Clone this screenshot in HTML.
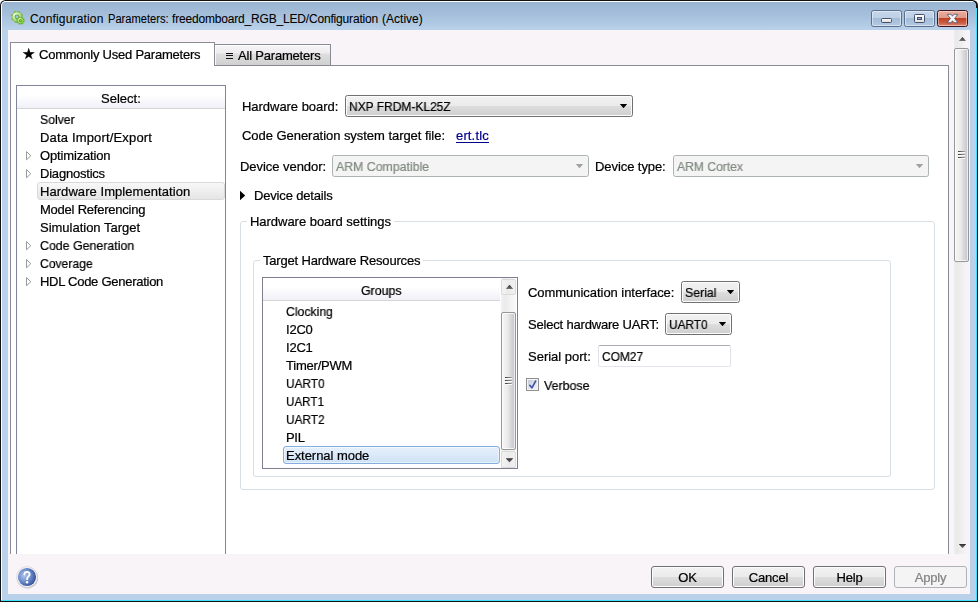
<!DOCTYPE html>
<html>
<head>
<meta charset="utf-8">
<title>Configuration Parameters</title>
<style>
html,body{margin:0;padding:0;}
body{width:978px;height:602px;overflow:hidden;background:#fff;font-family:"Liberation Sans",sans-serif;font-size:13px;color:#000;position:relative;}
.abs,.t{position:absolute;}
.t{white-space:nowrap;line-height:16px;height:16px;will-change:transform;-webkit-text-stroke:0.22px currentColor;}
.tt{will-change:auto;-webkit-text-stroke:0.08px currentColor;}
#win{position:absolute;left:0;top:0;width:978px;height:602px;background:#111;border-radius:5.5px 5.5px 0 0;overflow:hidden;}
#frame{position:absolute;left:1px;top:1px;width:975px;height:599px;background:#b9d1ea;border-radius:5px 5px 0 0;box-shadow:inset 1px 1px 0 #fff;}
#cyanR{position:absolute;left:976px;top:8px;width:1px;height:593px;background:#3fe4fb;}
#cyanB{position:absolute;left:1px;top:600px;width:976px;height:1px;background:#3fe4fb;}
#titlegrad{position:absolute;left:2px;top:2px;width:974px;height:28px;border-radius:3.5px 3.5px 0 0;background:linear-gradient(#99b4d1 0%,#a5bfdb 45%,#b9d1ea 100%);}
#client{position:absolute;left:8px;top:30px;width:962px;height:564px;background:#f8f4f8;}
/* caption buttons */
.cb{position:absolute;top:10px;height:17px;width:31px;box-sizing:border-box;border:1px solid #5b6e8c;border-radius:2.5px;box-shadow:inset 0 0 0 1px rgba(255,255,255,.45);background:linear-gradient(#c4d6ea 0%,#bdd0e6 47%,#a3bcd8 50%,#b3c9e2 100%);}
#bclose{border-color:#3f1620;box-shadow:inset 0 0 0 1px rgba(255,225,215,.55);background:linear-gradient(#eaac9f 0%,#e09a8b 45%,#bf4226 50%,#c9583e 75%,#dc8670 100%);}
/* tabs */
#pane{position:absolute;left:10px;top:65px;width:939px;height:489px;background:#fff;border:1px solid #898c95;border-bottom:none;box-sizing:border-box;}
#tab1{position:absolute;left:10px;top:42px;width:205px;height:24px;background:#fff;border:1px solid #898c95;border-bottom:none;box-sizing:border-box;}
#tab2{position:absolute;left:214px;top:44px;width:117px;height:21px;box-shadow:inset 1px 1px 0 rgba(255,255,255,.8);background:linear-gradient(#f7f4f7 0%,#eeecee 40%,#dedede 46%,#d0d0d0 100%);border:1px solid #898c95;border-bottom:none;box-sizing:border-box;}
/* tree */
#tree{position:absolute;left:16px;top:85px;width:210px;height:469px;border:1px solid #82849a;border-bottom:none;box-sizing:border-box;background:#fff;}
#treehd{position:absolute;left:17px;top:86px;width:208px;height:22px;background:linear-gradient(#ffffff 0%,#ffffff 40%,#f0f0f8 100%);border-bottom:1px solid #d5d5d5;}
#sel1{position:absolute;left:37px;top:182px;width:188px;height:18px;box-sizing:border-box;border:1px solid #d9d9d9;border-radius:3px;background:linear-gradient(#f8f8f8,#e5e5e5);}
.tri{position:absolute;width:7px;height:9px;}
/* combos */
.combo{position:absolute;box-sizing:border-box;height:22px;border:1px solid #707070;border-radius:2.5px;box-shadow:inset 0 0 0 1px #fcfcfc;background:linear-gradient(#f2f2f2 0%,#ebebeb 48%,#dddddd 52%,#cfcfcf 100%);}
.combo.dis{border-color:#adb2b5;background:#f4f4f4;box-shadow:none;}
.arr{position:absolute;width:7.8px;height:4.4px;margin-left:-0.4px;margin-top:-0.2px;background:#000;clip-path:polygon(0 0,100% 0,50% 100%);}
.arr.g{background:#a0a0a0;}
.gb{position:absolute;box-sizing:border-box;border:1px solid #d5dfe5;border-radius:3px;}
.gbt{background:#fff;padding:0 3px;margin-left:-3px;}
/* list */
#list{position:absolute;left:262px;top:277px;width:256px;height:192px;box-sizing:border-box;border:1px solid #807f92;background:#fff;}
#listhd{position:absolute;left:263px;top:278px;width:237px;height:22px;background:linear-gradient(#ffffff 0%,#ffffff 40%,#f0f0f8 100%);border-bottom:1px solid #d5d5d5;}
#sel2{position:absolute;left:283px;top:446px;width:217px;height:18px;box-sizing:border-box;border:1px solid #84acdd;border-radius:3px;box-shadow:inset 0 0 0 1px rgba(255,255,255,.5);background:linear-gradient(#e6f0fa,#cfe2f7);}
.btn{position:absolute;top:566px;width:73px;height:22px;box-sizing:border-box;border:1px solid #707070;border-radius:3px;box-shadow:inset 0 0 0 1px #fcfcfc;background:linear-gradient(#f2f2f2 0%,#ebebeb 48%,#dddddd 52%,#cfcfcf 100%);text-align:center;line-height:22px;font-size:13px;will-change:transform;-webkit-text-stroke:0.22px currentColor;letter-spacing:-0.2px;}
.btn.dis{border-color:#adb2b5;background:#f4f4f4;color:#838383;box-shadow:none;}
.gray{color:#808a80;}

.thumb{position:absolute;box-sizing:border-box;border:1px solid #979797;border-radius:2px;box-shadow:inset 0 0 0 1px rgba(255,255,255,.7);background:linear-gradient(90deg,#f6f6f6 0%,#ececec 40%,#d6d6da 70%,#c3c3cb 100%);}
.arrU,.arrD{position:absolute;width:7.6px;height:4.3px;margin-left:-0.3px;}
.arrU{background:linear-gradient(#2a2a2a,#7a7a7a);clip-path:polygon(50% 0,100% 100%,0 100%);}
.arrD{background:linear-gradient(#2a2a2a,#7a7a7a);clip-path:polygon(0 0,100% 0,50% 100%);}
.grip{position:absolute;width:7px;height:8px;background:linear-gradient(90deg,#3a3a3a,#a5a5a5) 0 0/100% 1px no-repeat,linear-gradient(90deg,#3a3a3a,#a5a5a5) 0 3px/100% 1px no-repeat,linear-gradient(90deg,#3a3a3a,#a5a5a5) 0 6px/100% 1px no-repeat,linear-gradient(#fbfbfb,#fbfbfb) 0 1px/100% 1px no-repeat,linear-gradient(#fbfbfb,#fbfbfb) 0 4px/100% 1px no-repeat,linear-gradient(#fbfbfb,#fbfbfb) 0 7px/100% 1px no-repeat;}
.sbbtn{position:absolute;box-sizing:border-box;border:1px solid #dadada;border-radius:2px;background:linear-gradient(90deg,#f3f3f3,#ebebeb 50%,#f1f1f1);}
</style>
</head>
<body>
<div id="win">
<div id="frame"></div>
<div id="titlegrad"></div>
<div id="cyanR"></div><div id="cyanB"></div>
<div id="client"></div>

<!-- title -->
<svg class="abs" style="left:10px;top:10px" width="16" height="16" viewBox="0 0 16 16">
<defs><radialGradient id="gg1" cx="0.3" cy="0.3" r="0.8"><stop offset="0" stop-color="#f3fbe6"/><stop offset="0.6" stop-color="#b9e388"/><stop offset="1" stop-color="#93cf5a"/></radialGradient>
<radialGradient id="gg2" cx="0.35" cy="0.3" r="0.8"><stop offset="0" stop-color="#e8f7d0"/><stop offset="0.6" stop-color="#a4dc5c"/><stop offset="1" stop-color="#80c840"/></radialGradient></defs>
<circle cx="7" cy="6.8" r="5.3" fill="none" stroke="#74b646" stroke-width="1.6" stroke-dasharray="2.3 1.86"/>
<circle cx="7" cy="6.8" r="4.9" fill="url(#gg1)" stroke="#78ba48" stroke-width="0.7"/>
<circle cx="7" cy="6.8" r="2.4" fill="#5da334"/>
<circle cx="7" cy="6.8" r="1.5" fill="#a7c2df"/>
<circle cx="10.5" cy="10.6" r="3.5" fill="none" stroke="#62ae34" stroke-width="1.4" stroke-dasharray="1.5 1.25"/>
<circle cx="10.5" cy="10.6" r="3.2" fill="url(#gg2)" stroke="#62ae34" stroke-width="0.7"/>
<circle cx="10.5" cy="10.6" r="1.6" fill="#58a828"/>
<circle cx="10.5" cy="10.6" r="0.7" fill="#8ed040"/>
</svg>
<span class="t tt" id="title1" style="left:30px;top:11px;font-size:12px;letter-spacing:0.167px;">Configuration</span>
<span class="t tt" id="title2" style="left:108px;top:11px;font-size:12px;letter-spacing:0px;transform:scaleX(0.9281);transform-origin:0 50%;">Parameters:</span>
<span class="t tt" id="title3" style="left:172px;top:11px;font-size:12px;letter-spacing:-0.179px;">freedomboard_RGB_LED/Configuration</span>
<span class="t tt" id="title4" style="left:382px;top:11px;font-size:12px;letter-spacing:0.014px;">(Active)</span>
<div class="cb" id="bmin" style="left:871px"></div>
<div class="abs" style="left:881px;top:18px;width:11px;height:5px;box-sizing:border-box;border:1px solid #47506a;border-radius:1.5px;background:linear-gradient(#ffffff,#dcdcdc);"></div>
<div class="cb" id="bmax" style="left:904px"></div>
<div class="abs" style="left:914px;top:14px;width:11px;height:9px;box-sizing:border-box;border:1px solid #47506a;border-radius:1.5px;background:linear-gradient(#ffffff,#e0e0e0);"></div>
<div class="abs" style="left:917px;top:17px;width:5px;height:3px;box-sizing:border-box;border:1px solid #47506a;background:#8fb0d6;"></div>
<div class="cb" id="bclose" style="left:937px"></div>
<svg class="abs" style="left:946px;top:13px" width="13" height="11" viewBox="0 0 13 11"><path d="M1.2 1.3 L5 1.3 L6.5 3.2 L8 1.3 L11.8 1.3 L8.6 5.5 L11.8 9.7 L8 9.7 L6.5 7.8 L5 9.7 L1.2 9.7 L4.4 5.5 Z" fill="#f6f6f6" stroke="#465270" stroke-width="0.8" stroke-linejoin="round"/></svg>

<!-- tabs -->
<div id="pane"></div>
<div id="tab2"></div>
<div id="tab1"></div>
<span class="t" id="star" style="left:22px;top:46px;font-size:15px;">★</span>
<span class="t" id="t_tab1" style="left:39px;top:47px;letter-spacing:-0.235px;">Commonly Used Parameters</span>
<div class="abs" style="left:226px;top:53px;width:7px;height:1px;background:#111;box-shadow:0 2px 0 #111,0 5px 0 #111;"></div>
<span class="t" id="t_tab2" style="left:238px;top:48px;letter-spacing:-0.2px;">All Parameters</span>

<!-- tree -->
<div id="tree"></div>
<div id="treehd"></div>
<span class="t" id="t_select" style="left:101px;top:91px;letter-spacing:0.0px;">Select:</span>
<div id="sel1"></div>
<span class="t" id="tr1" style="left:40px;top:112px;letter-spacing:0px;transform:scaleX(0.9417);transform-origin:0 50%;">Solver</span>
<span class="t" id="tr2" style="left:40px;top:130px;letter-spacing:0.165px;">Data Import/Export</span>
<span class="t" id="tr3" style="left:40px;top:148px;letter-spacing:-0.155px;">Optimization</span>
<span class="t" id="tr4" style="left:40px;top:166px;letter-spacing:-0.21px;">Diagnostics</span>
<span class="t" id="tr5" style="left:40px;top:184px;letter-spacing:0.059px;">Hardware Implementation</span>
<span class="t" id="tr6" style="left:40px;top:202px;letter-spacing:-0.225px;">Model Referencing</span>
<span class="t" id="tr7" style="left:40px;top:220px;letter-spacing:-0.013px;">Simulation Target</span>
<span class="t" id="tr8" style="left:40px;top:238px;letter-spacing:0px;transform:scaleX(0.9515);transform-origin:0 50%;">Code Generation</span>
<span class="t" id="tr9" style="left:40px;top:256px;letter-spacing:0px;transform:scaleX(0.9339);transform-origin:0 50%;">Coverage</span>
<span class="t" id="tr10" style="left:40px;top:274px;letter-spacing:-0.267px;">HDL Code Generation</span>

<svg class="abs" style="left:25px;top:151px" width="8" height="10" viewBox="0 0 8 10"><path d="M1.5 0.6 L1.5 8.8 L5.8 4.7 Z" fill="#fff" stroke="#969c96" stroke-width="1"/></svg>
<svg class="abs" style="left:25px;top:169px" width="8" height="10" viewBox="0 0 8 10"><path d="M1.5 0.6 L1.5 8.8 L5.8 4.7 Z" fill="#fff" stroke="#969c96" stroke-width="1"/></svg>
<svg class="abs" style="left:25px;top:241px" width="8" height="10" viewBox="0 0 8 10"><path d="M1.5 0.6 L1.5 8.8 L5.8 4.7 Z" fill="#fff" stroke="#969c96" stroke-width="1"/></svg>
<svg class="abs" style="left:25px;top:259px" width="8" height="10" viewBox="0 0 8 10"><path d="M1.5 0.6 L1.5 8.8 L5.8 4.7 Z" fill="#fff" stroke="#969c96" stroke-width="1"/></svg>
<svg class="abs" style="left:25px;top:277px" width="8" height="10" viewBox="0 0 8 10"><path d="M1.5 0.6 L1.5 8.8 L5.8 4.7 Z" fill="#fff" stroke="#969c96" stroke-width="1"/></svg>
<!-- right pane -->
<span class="t" id="l_hw" style="left:242px;top:99px;letter-spacing:-0.036px;">Hardware board:</span>
<div class="combo" style="left:345px;top:95px;width:288px;"></div>
<span class="t" id="v_hw" style="left:349px;top:99px;letter-spacing:0px;transform:scaleX(0.922);transform-origin:0 50%;">NXP FRDM-KL25Z</span>
<div class="arr" style="left:620px;top:104px;"></div>

<span class="t" id="l_cg" style="left:242px;top:128px;letter-spacing:-0.044px;">Code Generation system target file:</span>
<span class="t" id="v_cg" style="left:456px;top:128px;color:#00008b;letter-spacing:0.15px;">ert.tlc</span>
<div class="abs" style="left:456px;top:142px;width:33px;height:1px;background:#00008b;"></div>

<span class="t" id="l_dv" style="left:240px;top:159px;letter-spacing:-0.046px;">Device vendor:</span>
<div class="combo dis" style="left:332px;top:155px;width:257px;"></div>
<span class="t gray" id="v_dv" style="left:336px;top:159px;letter-spacing:0px;transform:scaleX(0.9469);transform-origin:0 50%;">ARM Compatible</span>
<div class="arr g" style="left:576px;top:164px;"></div>
<span class="t" id="l_dt" style="left:595px;top:159px;letter-spacing:-0.073px;">Device type:</span>
<div class="combo dis" style="left:673px;top:155px;width:256px;"></div>
<span class="t gray" id="v_dt" style="left:677px;top:159px;letter-spacing:0px;transform:scaleX(0.9324);transform-origin:0 50%;">ARM Cortex</span>
<div class="arr g" style="left:916px;top:164px;"></div>

<svg class="abs" style="left:240px;top:190px" width="6" height="11" viewBox="0 0 6 11"><path d="M0 0.8 L0 10.2 L5.2 5.5 Z" fill="#000"/></svg>
<span class="t" id="l_dd" style="left:254px;top:188px;letter-spacing:-0.169px;">Device details</span>

<div class="gb" style="left:240px;top:221px;width:695px;height:269px;"></div>
<span class="t gbt" id="g1" style="left:250px;top:214px;letter-spacing:-0.032px;">Hardware board settings</span>
<div class="gb" style="left:253px;top:260px;width:638px;height:217px;"></div>
<span class="t gbt" id="g2" style="left:263px;top:253px;letter-spacing:-0.183px;">Target Hardware Resources</span>

<div id="list"></div>
<div id="listhd"></div>
<span class="t" id="t_groups" style="left:361px;top:283px;letter-spacing:0px;transform:scaleX(0.9488);transform-origin:0 50%;">Groups</span>
<div id="sel2"></div>
<span class="t" id="li1" style="left:286px;top:304px;letter-spacing:0px;transform:scaleX(0.9408);transform-origin:0 50%;">Clocking</span>
<span class="t" id="li2" style="left:286px;top:322px;letter-spacing:-0.233px;">I2C0</span>
<span class="t" id="li3" style="left:286px;top:340px;letter-spacing:-0.233px;">I2C1</span>
<span class="t" id="li4" style="left:286px;top:358px;letter-spacing:-0.212px;">Timer/PWM</span>
<span class="t" id="li5" style="left:286px;top:376px;letter-spacing:0px;transform:scaleX(0.9098);transform-origin:0 50%;">UART0</span>
<span class="t" id="li6" style="left:286px;top:394px;letter-spacing:0px;transform:scaleX(0.8951);transform-origin:0 50%;">UART1</span>
<span class="t" id="li7" style="left:286px;top:412px;letter-spacing:0px;transform:scaleX(0.9098);transform-origin:0 50%;">UART2</span>
<span class="t" id="li8" style="left:286px;top:430px;letter-spacing:-0.3px;">PIL</span>
<span class="t" id="li9" style="left:286px;top:448px;letter-spacing:-0.042px;">External mode</span>

<span class="t" id="l_ci" style="left:528px;top:285px;letter-spacing:-0.043px;">Communication interface:</span>
<div class="combo" style="left:681px;top:281px;width:59px;height:22px;"></div>
<span class="t" id="v_ci" style="left:685px;top:285px;letter-spacing:0px;transform:scaleX(0.9469);transform-origin:0 50%;">Serial</span>
<div class="arr" style="left:727px;top:290px;"></div>
<span class="t" id="l_su" style="left:528px;top:317px;letter-spacing:-0.185px;">Select hardware UART:</span>
<div class="combo" style="left:665px;top:313px;width:67px;height:22px;"></div>
<span class="t" id="v_su" style="left:669px;top:317px;letter-spacing:0px;transform:scaleX(0.9098);transform-origin:0 50%;">UART0</span>
<div class="arr" style="left:719px;top:322px;"></div>
<span class="t" id="l_sp" style="left:528px;top:349px;letter-spacing:-0.009px;">Serial port:</span>
<div class="abs" style="left:598px;top:345px;width:133px;height:22px;box-sizing:border-box;border:1px solid #e0e1e9;border-top-color:#abadb6;border-bottom-color:#e4e6ee;border-radius:2px;background:#fff;"></div>
<span class="t" id="v_sp" style="left:602px;top:349px;letter-spacing:0px;transform:scaleX(0.9182);transform-origin:0 50%;">COM27</span>
<div class="abs" style="left:526px;top:378px;width:13px;height:13px;box-sizing:border-box;border:1px solid #8e8f8f;background:linear-gradient(135deg,#bcc2d4 0%,#dfe2ea 48%,#f7f7fa 100%);box-shadow:inset 0 0 0 1px #f4f4f4;"></div>
<svg class="abs" style="left:526px;top:378px" width="13" height="13" viewBox="0 0 13 13"><path d="M3.8 7.3 L5.9 9.8 L9.6 3.1" fill="none" stroke="#3f55a6" stroke-width="1.7" stroke-linecap="round" stroke-linejoin="round"/></svg>
<span class="t" id="l_vb" style="left:544px;top:378px;letter-spacing:0px;transform:scaleX(0.9532);transform-origin:0 50%;">Verbose</span>

<!-- main scrollbar -->
<div class="abs" style="left:954px;top:30px;width:16px;height:524px;background:linear-gradient(90deg,#efeeef 0%,#e9e9e9 15%,#efefef 50%,#f6f3f6 70%,#f8f4f8 100%);"></div>
<div class="arrU" style="left:959px;top:37px;"></div>
<div class="arrD" style="left:959px;top:544px;"></div>
<div class="thumb" style="left:954px;top:48px;width:15px;height:214px;"></div>
<div class="grip" style="left:958px;top:151px;"></div>
<!-- list scrollbar -->
<div class="abs" style="left:501px;top:278px;width:15px;height:190px;background:linear-gradient(90deg,#f1f1f1 0%,#ebebeb 30%,#f1f1f1 55%,#fafafa 100%);"></div>
<div class="sbbtn" style="left:501px;top:279px;width:15px;height:16px;"></div>
<div class="sbbtn" style="left:501px;top:451px;width:15px;height:17px;"></div>
<div class="arrU" style="left:506px;top:284.7px;"></div>
<div class="arrD" style="left:506px;top:458.3px;"></div>
<div class="thumb" style="left:501px;top:312px;width:15px;height:138px;"></div>
<div class="grip" style="left:505px;top:377px;"></div>
<svg class="abs" style="left:15px;top:565px" width="24" height="24" viewBox="0 0 24 24">
<defs><radialGradient id="hg" cx="0.36" cy="0.42" r="0.7"><stop offset="0" stop-color="#b3c6ea"/><stop offset="0.5" stop-color="#6d8ccb"/><stop offset="1" stop-color="#2b4590"/></radialGradient></defs>
<circle cx="12.4" cy="12.7" r="10.7" fill="#a8a8ae" opacity="0.7"/>
<circle cx="12" cy="12" r="10.4" fill="#f4f4f6" stroke="#d2d2d6" stroke-width="0.6"/>
<circle cx="12" cy="12" r="9.1" fill="url(#hg)"/>
<path d="M9.4 9.3 C9.4 6.1 14.6 6.1 14.6 9.2 C14.6 11.3 12.1 11.7 12.1 14.2" fill="none" stroke="#fff" stroke-width="1.8" stroke-linecap="round"/>
<circle cx="12.1" cy="17.2" r="1.2" fill="#fff"/>
</svg>
<!-- buttons -->
<div class="btn" style="left:651px">OK</div>
<div class="btn" style="left:732px">Cancel</div>
<div class="btn" style="left:813px">Help</div>
<div class="btn dis" style="left:894px">Apply</div>
</div>
</body>
</html>
